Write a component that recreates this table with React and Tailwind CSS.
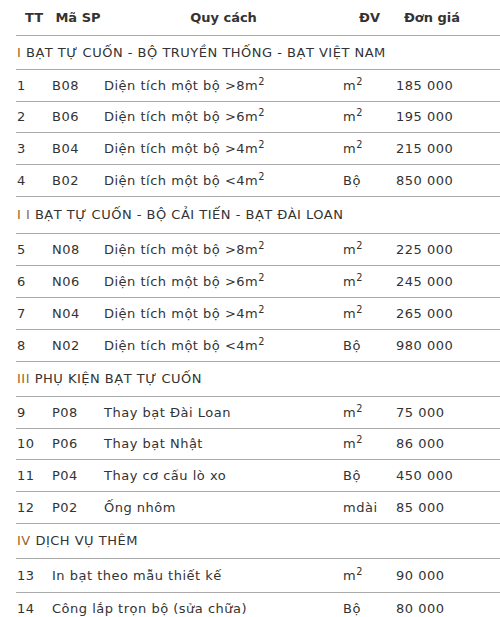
const sections = [
  {
    num: 'I',
    title: 'BẠT TỰ CUỐN - BỘ TRUYỀN THỐNG - BẠT VIỆT NAM',
    h: 'h-[34px]',
    rows: [
      ['1', 'B08', 'Diện tích một bộ >8m', true, 'm2', '185 000', 'h-[32px]'],
      ['2', 'B06', 'Diện tích một bộ >6m', true, 'm2', '195 000', 'h-[31px]'],
      ['3', 'B04', 'Diện tích một bộ >4m', true, 'm2', '215 000', 'h-[32px]'],
      ['4', 'B02', 'Diện tích một bộ <4m', true, 'Bộ', '850 000', 'h-[32px]'],
    ],
  },
  {
    num: 'I I',
    title: 'BẠT TỰ CUỐN - BỘ CẢI TIẾN - BẠT ĐÀI LOAN',
    h: 'h-[37px]',
    rows: [
      ['5', 'N08', 'Diện tích một bộ >8m', true, 'm2', '225 000', 'h-[32px]'],
      ['6', 'N06', 'Diện tích một bộ >6m', true, 'm2', '245 000', 'h-[32px]'],
      ['7', 'N04', 'Diện tích một bộ >4m', true, 'm2', '265 000', 'h-[32px]'],
      ['8', 'N02', 'Diện tích một bộ <4m', true, 'Bộ', '980 000', 'h-[32px]'],
    ],
  },
  {
    num: 'III',
    title: 'PHỤ KIỆN BẠT TỰ CUỐN',
    h: 'h-[35px]',
    rows: [
      ['9', 'P08', 'Thay bạt Đài Loan', false, 'm2', '75 000', 'h-[32px]'],
      ['10', 'P06', 'Thay bạt Nhật', false, 'm2', '86 000', 'h-[31px]'],
      ['11', 'P04', 'Thay cơ cấu lò xo', false, 'Bộ', '450 000', 'h-[32px]'],
      ['12', 'P02', 'Ống nhôm', false, 'mdài', '85 000', 'h-[32px]'],
    ],
  },
  {
    num: 'IV',
    title: 'DỊCH VỤ THÊM',
    h: 'h-[35px]',
    rows: [
      ['13', null, 'In bạt theo mẫu thiết kế', false, 'm2', '90 000', 'h-[34px]'],
      ['14', null, 'Công lắp trọn bộ (sửa chữa)', false, 'Bộ', '80 000', 'h-[32px]'],
    ],
  },
]

function Unit({ u }) {
  if (u === 'm2') return <span>m<sup>2</sup></span>
  return <span>{u}</span>
}

const grid = 'grid grid-cols-[36px_52px_239px_53px_72px_1fr] items-center'

export default function App() {
  return (
    <div
      className="w-[500px] h-[617px] overflow-hidden bg-white text-[#333] text-[13px] tracking-[0.5px] pl-[16px]"
      style={{ fontFamily: '"DejaVu Sans", Verdana, sans-serif' }}
    >
      <div className={`${grid} h-[35px] font-bold tracking-normal`}>
        <div className="text-center">TT</div>
        <div className="text-center">Mã SP</div>
        <div className="text-center">Quy cách</div>
        <div className="text-center">ĐV</div>
        <div className="text-center">Đơn giá</div>
        <div />
      </div>
      {sections.map((s) => (
        <div key={s.title}>
          <div className={`${s.h} flex items-center border-t border-[#a9a9a9] pl-px`}>
            <span className="text-[#9a6430]">{s.num}</span>
            <span>&nbsp;{s.title}</span>
          </div>
          {s.rows.map((r) => (
            <div key={r[0]} className={`${grid} ${r[6]} border-t border-[#a9a9a9]`}>
              <div className="pl-px">{r[0]}</div>
              {r[1] ? (
                <>
                  <div>{r[1]}</div>
                  <div>
                    {r[2]}
                    {r[3] && <sup>2</sup>}
                  </div>
                </>
              ) : (
                <div className="col-span-2">{r[2]}</div>
              )}
              <div><Unit u={r[4]} /></div>
              <div>{r[5]}</div>
              <div />
            </div>
          ))}
        </div>
      ))}
    </div>
  )
}
